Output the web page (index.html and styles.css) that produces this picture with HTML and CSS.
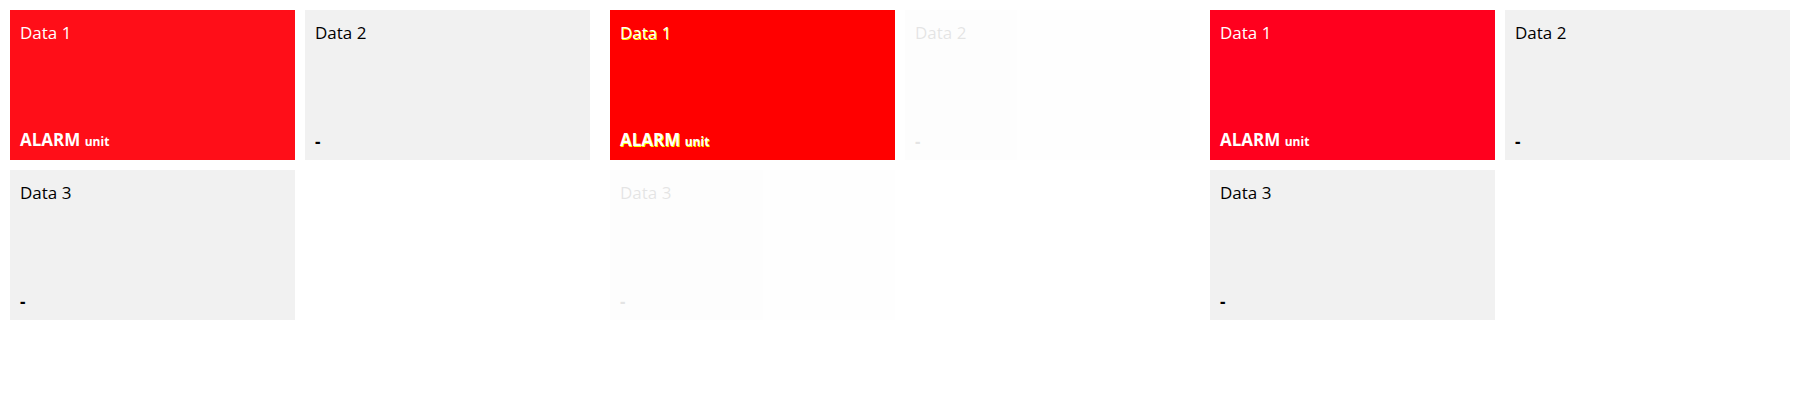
FILE: index.html
```html
<!DOCTYPE html>
<html>
<head>
<meta charset="utf-8">
<link rel="stylesheet" href="styles.css">
</head>
<body>
<div class="page">
  <div class="group">
    <div class="tile alarm alarm-a"><div class="title">Data 1</div><div class="value">ALARM <span class="unit">unit</span></div></div>
    <div class="tile"><div class="title">Data 2</div><div class="value">-</div></div>
    <div class="tile"><div class="title">Data 3</div><div class="value">-</div></div>
  </div>
  <div class="group">
    <div class="tile alarm alarm-b"><div class="title">Data 1</div><div class="value">ALARM <span class="unit">unit</span></div></div>
    <div class="tile faded"><div class="title">Data 2</div><div class="value">-</div></div>
    <div class="tile faded"><div class="title">Data 3</div><div class="value">-</div></div>
  </div>
  <div class="group">
    <div class="tile alarm alarm-c"><div class="title">Data 1</div><div class="value">ALARM <span class="unit">unit</span></div></div>
    <div class="tile"><div class="title">Data 2</div><div class="value">-</div></div>
    <div class="tile"><div class="title">Data 3</div><div class="value">-</div></div>
  </div>
</div>
</body>
</html>
```
FILE: styles.css
```css
html, body {
  margin: 0;
  padding: 0;
  background: #ffffff;
}
body {
  font-family: "Open Sans", "Noto Sans", sans-serif;
  color: #000000;
}
.page {
  display: flex;
  width: 1800px;
}
.group {
  width: 600px;
  box-sizing: border-box;
  padding: 10px;
  display: grid;
  grid-template-columns: 285px 285px;
  grid-auto-rows: 150px;
  gap: 10px;
}
.tile {
  background: #f1f1f1;
  box-sizing: border-box;
  padding: 12px 10px 8px;
  display: flex;
  flex-direction: column;
  justify-content: space-between;
}
.title {
  font-size: 17px;
  line-height: 22px;
}
.value {
  font-size: 17px;
  font-weight: 700;
  line-height: 20px;
}
.unit {
  font-size: 12px;
}
.alarm {
  color: #ffffff;
}
.alarm-a { background: #ff0e18; }
.alarm-b { background: #ff0000; }
.alarm-b .title, .alarm-b .value {
  text-shadow: 0.6px 0.6px 0 #ffff00;
}
.alarm-c { background: #ff001e; }
.faded {
  opacity: 0.1;
}
```
